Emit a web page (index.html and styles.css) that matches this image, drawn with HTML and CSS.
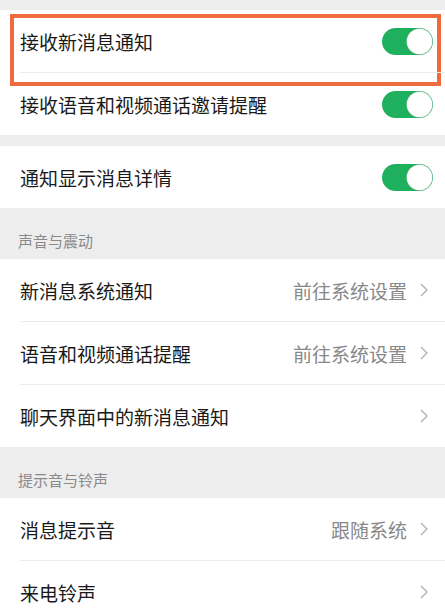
FILE: index.html
```html
<!DOCTYPE html>
<html lang="zh-CN">
<head>
    <meta charset="UTF-8">
    <meta name="viewport" content="width=device-width, initial-scale=1.0">
    <title>新消息通知</title>
    <link rel="stylesheet" href="styles.css">
</head>
<body>

    <div class="spacer-top"></div>

    <div class="group">
        <div class="row">
            <div class="row-body">
                <span class="label">接收新消息通知</span>
                <span class="switch"><span class="knob"></span></span>
            </div>
            <div class="highlight"></div>
        </div>
        <div class="row">
            <div class="row-body">
                <span class="label">接收语音和视频通话邀请提醒</span>
                <span class="switch"><span class="knob"></span></span>
            </div>
        </div>
    </div>

    <div class="gap"></div>

    <div class="group">
        <div class="row">
            <div class="row-body">
                <span class="label">通知显示消息详情</span>
                <span class="switch"><span class="knob"></span></span>
            </div>
        </div>
    </div>

    <div class="section-title">声音与震动</div>

    <div class="group">
        <div class="row">
            <div class="row-body link">
                <span class="label">新消息系统通知</span>
                <span class="value">前往系统设置</span>
                <svg class="arrow" width="8" height="14" viewBox="0 0 8 14"><polyline points="1,1 7,7 1,13" fill="none" stroke="#b2b2b2" stroke-width="1.4"/></svg>
            </div>
        </div>
        <div class="row">
            <div class="row-body link">
                <span class="label">语音和视频通话提醒</span>
                <span class="value">前往系统设置</span>
                <svg class="arrow" width="8" height="14" viewBox="0 0 8 14"><polyline points="1,1 7,7 1,13" fill="none" stroke="#b2b2b2" stroke-width="1.4"/></svg>
            </div>
        </div>
        <div class="row">
            <div class="row-body link">
                <span class="label">聊天界面中的新消息通知</span>
                <span class="value"></span>
                <svg class="arrow" width="8" height="14" viewBox="0 0 8 14"><polyline points="1,1 7,7 1,13" fill="none" stroke="#b2b2b2" stroke-width="1.4"/></svg>
            </div>
        </div>
    </div>

    <div class="section-title">提示音与铃声</div>

    <div class="group">
        <div class="row">
            <div class="row-body link">
                <span class="label">消息提示音</span>
                <span class="value">跟随系统</span>
                <svg class="arrow" width="8" height="14" viewBox="0 0 8 14"><polyline points="1,1 7,7 1,13" fill="none" stroke="#b2b2b2" stroke-width="1.4"/></svg>
            </div>
        </div>
        <div class="row">
            <div class="row-body link">
                <span class="label">来电铃声</span>
                <span class="value"></span>
                <svg class="arrow" width="8" height="14" viewBox="0 0 8 14"><polyline points="1,1 7,7 1,13" fill="none" stroke="#b2b2b2" stroke-width="1.4"/></svg>
            </div>
        </div>
    </div>

</body>
</html>
```

FILE: styles.css
```css
body {
    margin: 0;
    font-family: "Noto Sans CJK SC", "Noto Sans", sans-serif;
    background-color: #ededed;
    color: #191919;
    overflow: hidden;
}

.spacer-top {
    height: 10px;
}

.gap {
    height: 11px;
}

.group {
    background-color: #ffffff;
}

.row {
    position: relative;
    padding-left: 20px;
}

.row-body {
    display: flex;
    align-items: center;
    height: 62px;
    padding-right: 12px;
    border-top: 1px solid #ebebeb;
}

.row:first-child .row-body {
    border-top: none;
}

.row-body.link {
    padding-right: 17px;
}

.label {
    flex: 1;
    font-size: 19px;
}

.value {
    font-size: 19px;
    color: #888888;
    margin-right: 13px;
}

.arrow {
    display: block;
}

.switch {
    display: flex;
    justify-content: flex-end;
    align-items: center;
    width: 51px;
    height: 27px;
    padding: 0 1px;
    box-sizing: border-box;
    border-radius: 14px;
    background-color: #1fb05e;
}

.knob {
    width: 25px;
    height: 25px;
    border-radius: 50%;
    background-color: #ffffff;
    box-shadow: 0 0 0 0.5px #d8d8d8;
}

.section-title {
    height: 51px;
    display: flex;
    align-items: flex-end;
    box-sizing: border-box;
    padding: 0 0 8px 18px;
    font-size: 15px;
    color: #8a8a8a;
}

.highlight {
    position: absolute;
    left: 10px;
    top: 4px;
    width: 431px;
    height: 72px;
    box-sizing: border-box;
    border: 4px solid #ee6b3d;
}
```
